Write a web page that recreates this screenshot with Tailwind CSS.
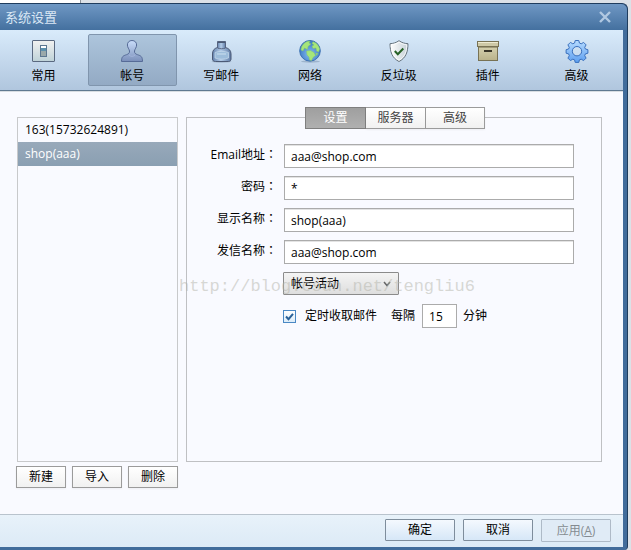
<!DOCTYPE html>
<html lang="zh-CN">
<head>
<meta charset="utf-8">
<meta name="viewport" content="width=device-width, initial-scale=1">
<title>系统设置</title>
<script src="https://cdn.jsdelivr.net/npm/@tailwindcss/browser@4"></script>
</head>
<body class="flex min-h-screen flex-col bg-[#dbe1e7] pr-[3px] font-['Open_Sans','Noto_Sans_CJK_SC',sans-serif] text-[12px] leading-4 text-black">
  <div class="h-[3px] w-[81px] border-r border-[#8b9299] bg-white"></div>

  <div class="relative flex flex-1 flex-col rounded-tr-md rounded-br-sm border-t border-r border-[#1f3d5e] bg-[#416c9b] pr-1 pb-[3px]">
    <header class="-mr-1 flex h-[26px] items-center justify-between rounded-tr-md bg-linear-to-b from-[#6f98c4] to-[#44709f] pr-4 pl-[5px]">
      <h1 class="text-[13px] text-[#dbe8f5]">系统设置</h1>
      <button type="button" aria-label="关闭" class="flex size-3 items-center justify-center">
        <svg class="size-3" viewBox="0 0 12 12" fill="none" stroke="#b0c8e1" stroke-width="2.4"><path d="M1 1l10 10M11 1L1 11"/></svg>
      </button>
    </header>

    <nav class="border-b border-[#5f7991] bg-linear-to-b from-[#d9ebfb] to-[#b0c6de]">
      <div class="mr-0.5 -ml-px grid h-[60px] grid-cols-7 py-1">
        <button type="button" class="flex flex-col items-center gap-[5px] pt-[5px]">
          <svg class="size-6" viewBox="0 0 24 24"><defs><linearGradient id="g1" x2="0" y2="1"><stop stop-color="#f2f2f1"/><stop offset="1" stop-color="#bed2d8"/></linearGradient></defs><rect x="1.5" y="1.5" width="22" height="21" rx=".5" fill="url(#g1)" stroke="#5a6980"/><rect x="9.5" y="6.5" width="6" height="11" fill="#9aa9aa" stroke="#5c7791"/><rect x="10" y="7" width="5" height="2" fill="#fff"/><rect x="10" y="9" width="5" height="3" fill="#5c91ad"/></svg>
          <span>常用</span>
        </button>
        <button type="button" aria-pressed="true" class="flex flex-col items-center gap-[5px] rounded-xs border border-[#8095ad] bg-linear-to-b from-[#adc5dc] to-[#93aac4] pt-1">
          <svg class="size-6" viewBox="0 0 24 24"><defs><linearGradient id="g2" x2="0" y2="1"><stop stop-color="#c9ddfa"/><stop offset="1" stop-color="#7a8fba"/></linearGradient></defs><path d="M12 1.500c-3 0-4.600 2-4.600 4.500 0 2.500 1.800 4 2.100 6 .3 2-1 3-3 3.700C3 16.900 1.500 17.500 1.500 22.500h21c0-5-1.500-5.600-5-6.800-2-.7-3.300-1.700-3-3.700.3-2 2.100-3.500 2.100-6 0-2.500-1.600-4.500-4.600-4.500z" fill="url(#g2)" stroke="#566b97"/><path d="M9 16c1.500 1.800 4.500 1.800 6 0" fill="none" stroke="#a9bbdf" opacity=".7"/></svg>
          <span>帐号</span>
        </button>
        <button type="button" class="flex flex-col items-center gap-[5px] pt-[5px]">
          <svg class="size-6" viewBox="0 0 24 24"><defs><linearGradient id="g3" x2="1" y2="0"><stop stop-color="#6482ad"/><stop offset=".45" stop-color="#b3cce8"/><stop offset="1" stop-color="#5f7ba5"/></linearGradient></defs><ellipse cx="12.500" cy="22.500" rx="10" ry="1.200" fill="#7c91aa" opacity=".5"/><path d="M8.500 8.500h8c3.500 1 5.500 3 5.500 6.500v5c0 1.500-1 2.500-2.500 2.500h-13C4.500 22.500 3.500 21.500 3.500 20v-5c0-3.500 1.500-5.500 5-6.500z" fill="url(#g3)" stroke="#4b5975"/><path d="M8.500 2.500h8V9c-2 1-6 1-8 0z" fill="url(#g3)" stroke="#56637f"/><path d="M9 3.500h7" stroke="#4a5a74"/><path d="M6 13.500c3-1.500 10.500-1.500 13.500 0v5.500c-4 1.500-9.500 1.500-13.500 0z" fill="#9dbddb" stroke="#c5daec" stroke-width=".7"/><path d="M8 15h9" stroke="#cce0ef"/></svg>
          <span>写邮件</span>
        </button>
        <button type="button" class="flex flex-col items-center gap-[5px] pt-[5px]">
          <svg class="size-6" viewBox="0 0 24 24"><defs><radialGradient id="g4" cy=".65"><stop stop-color="#86bff4"/><stop offset="1" stop-color="#4480c8"/></radialGradient></defs><ellipse cx="12.500" cy="22.500" rx="9.500" ry="1.200" fill="#64809e" opacity=".4"/><circle cx="12" cy="11.800" r="10.300" fill="url(#g4)" stroke="#3a70b2"/><path d="M4 7c2-3.500 5-5 8-5l-1 2 2 1-3 2.500-.5 3L6.500 9 5 12 3 11c0-1.500.3-2.700 1-4zM15 2.700c3.500 1 6 4 6.700 7.300l-1.200 3-2-1-.5-3-3 .5-1-2.500 2-1-2-1.500zM8.500 12l4-.5 3.500 2 1.500 3-2.500 2-1.500 3-2-.5-.5-3-2-2zM18 14l2 .5-1.500 2z" fill="#a6e67a" stroke="#80c76c" stroke-width=".5"/></svg>
          <span>网络</span>
        </button>
        <button type="button" class="flex flex-col items-center gap-[5px] pt-[5px]">
          <svg class="size-6" viewBox="0 0 24 24"><defs><linearGradient id="g5" x2="1"><stop stop-color="#fff"/><stop offset="1" stop-color="#c5d0d6"/></linearGradient></defs><path d="M12 1.700c2.800 2 5.600 2.800 9 3-.1 8-2 14.300-9 17.800C5 19 3.100 12.700 3 4.700c3.400-.2 6.200-1 9-3z" fill="url(#g5)" stroke="#65727c"/><path d="M12 3c2.500 1.700 5 2.500 7.800 2.800C19.600 12.500 18 18 12 21.200 6 18 4.400 12.500 4.200 5.800 7 5.500 9.500 4.700 12 3z" fill="none" stroke="#fff" stroke-width=".8"/><path d="M7.800 12l3 3.200 5.500-5.700" fill="none" stroke="#276126" stroke-width="2"/></svg>
          <span>反垃圾</span>
        </button>
        <button type="button" class="flex flex-col items-center gap-[5px] pt-[5px]">
          <svg class="size-6" viewBox="0 0 24 24"><defs><linearGradient id="g6" x2="0" y2="1"><stop stop-color="#d7d3b2"/><stop offset="1" stop-color="#b9b28a"/></linearGradient></defs><rect x="2.500" y="6.500" width="19" height="15" fill="url(#g6)" stroke="#787254"/><rect x="1.500" y="2.500" width="21" height="5" fill="#cec9a7" stroke="#787254"/><path d="M2 3.500h20" stroke="#eeebd2"/><path d="M3 8.500h18" stroke="#a09a79"/><path d="M8 12h8" stroke="#383528" stroke-width="2"/></svg>
          <span>插件</span>
        </button>
        <button type="button" class="flex flex-col items-center gap-[5px] pt-[5px]">
          <svg class="size-6" viewBox="0 0 24 24"><defs><linearGradient id="g7" x2="0" y2="1"><stop stop-color="#b6dbff"/><stop offset="1" stop-color="#5e9ff0"/></linearGradient></defs><path fill-rule="evenodd" d="M10.200 1.500h3.600l.6 2.500 1.800.8 2.400-1.400 2.500 2.500-1.400 2.400.7 1.700 2.500.7v3.500l-2.500.7-.7 1.800 1.400 2.400-2.500 2.500-2.400-1.400-1.800.7-.6 2.500h-3.600L9.600 20.900l-1.800-.7-2.400 1.400-2.500-2.500 1.400-2.400-.7-1.800-2.500-.7v-3.500l2.500-.7.7-1.700-1.400-2.400 2.500-2.500 2.400 1.400L9.600 4zM12 7.500a4.700 4.700 0 1 0 0 9.400 4.700 4.700 0 0 0 0-9.400z" fill="url(#g7)" stroke="#3a70bd" stroke-linejoin="round"/></svg>
          <span>高级</span>
        </button>
      </div>
    </nav>

    <main class="flex flex-1 gap-2 border-t border-[#d8dde2] bg-[#f9faff] pt-[25px] pr-[21px] pb-[26px] pl-4">
      <aside class="flex w-[162px] flex-col gap-1">
        <ul class="ml-px flex-1 border border-[#c8c9cb]">
          <li><button type="button" class="block h-6 w-full px-[7px] text-left">163(15732624891)</button></li>
          <li><button type="button" aria-current="true" class="block h-6 w-full bg-linear-to-b from-[#98a9ba] to-[#8a9fb2] px-[7px] text-left text-white">shop(aaa)</button></li>
        </ul>
        <div class="grid grid-cols-3 gap-1.5">
          <button type="button" class="h-[22px] border border-[#9b9b9b] bg-linear-to-b from-white to-[#f1f1f1] shadow-xs">新建</button>
          <button type="button" class="h-[22px] border border-[#9b9b9b] bg-linear-to-b from-white to-[#f1f1f1] shadow-xs">导入</button>
          <button type="button" class="h-[22px] border border-[#9b9b9b] bg-linear-to-b from-white to-[#f1f1f1] shadow-xs">删除</button>
        </div>
      </aside>

      <section class="mb-[26px] flex-1 border border-[#bfc0c3] pr-[27px]">
        <div role="tablist" class="-mt-[11px] mr-[-27px] flex justify-center pl-0.5">
          <button type="button" role="tab" aria-selected="true" class="h-[22px] w-[61px] border border-[#7f7f7f] bg-linear-to-b from-[#9f9f9f] to-[#b0b0b0] text-white">设置</button>
          <button type="button" role="tab" class="h-[22px] w-[60px] border-y border-r border-[#9b9b9b] bg-linear-to-b from-white to-[#f1f1f1] text-[#444] shadow-xs">服务器</button>
          <button type="button" role="tab" class="h-[22px] w-[59px] border-y border-r border-[#9b9b9b] bg-linear-to-b from-white to-[#f1f1f1] text-[#444] shadow-xs">高级</button>
        </div>

        <form class="mt-[15px] grid grid-cols-[90px_1fr] gap-x-[7px] gap-y-2">
          <label for="email" class="pt-0.5 text-right">Email地址<span class="font-['Noto_Sans_CJK_TC',sans-serif]" lang="zh-TW">：</span></label>
          <input id="email" type="text" value="aaa@shop.com" class="h-6 w-full border border-[#ababab] bg-white px-1.5 shadow-[inset_0_1px_0_#e3e3e3]">
          <label for="pwd" class="pt-0.5 text-right">密码<span class="font-['Noto_Sans_CJK_TC',sans-serif]" lang="zh-TW">：</span></label>
          <input id="pwd" type="text" value="*" class="h-6 w-full border border-[#ababab] bg-white px-1.5 shadow-[inset_0_1px_0_#e3e3e3]">
          <label for="display" class="pt-0.5 text-right">显示名称<span class="font-['Noto_Sans_CJK_TC',sans-serif]" lang="zh-TW">：</span></label>
          <input id="display" type="text" value="shop(aaa)" class="h-6 w-full border border-[#ababab] bg-white px-1.5 shadow-[inset_0_1px_0_#e3e3e3]">
          <label for="sender" class="pt-0.5 text-right">发信名称<span class="font-['Noto_Sans_CJK_TC',sans-serif]" lang="zh-TW">：</span></label>
          <input id="sender" type="text" value="aaa@shop.com" class="h-6 w-full border border-[#ababab] bg-white px-1.5 shadow-[inset_0_1px_0_#e3e3e3]">

          <div class="relative col-start-2 -ml-px h-6 w-[116px]">
            <select aria-label="帐号活动" class="block h-[23px] w-full appearance-none rounded-[1px] border border-[#8b8b8b] bg-linear-to-b from-[#f4f4f4] to-[#dedede] px-[7px]">
              <option>帐号活动</option>
            </select>
            <svg class="pointer-events-none absolute top-2 right-2 size-2" viewBox="0 0 8 8" fill="none" stroke="#666" stroke-width="1.500"><path d="M1 2l3 3.500L7 2"/></svg>
          </div>

          <div class="col-start-2 -ml-px flex h-6 items-center">
            <span class="relative flex">
              <input id="timed" type="checkbox" checked class="size-[13px] appearance-none border border-[#4a88c4] bg-linear-to-b from-white to-[#dcecf9]">
              <svg class="pointer-events-none absolute inset-0 size-[13px]" viewBox="0 0 13 13" fill="none" stroke="#2a6199" stroke-width="2"><path d="M3 6.500l2.500 2.700L10 3.800"/></svg>
            </span>
            <label for="timed" class="ml-[9px]">定时收取邮件</label>
            <label for="minutes" class="ml-[14px]">每隔</label>
            <input id="minutes" type="text" value="15" class="ml-[7px] h-6 w-[35px] border border-[#ababab] bg-white px-1.5">
            <span class="ml-1.5">分钟</span>
          </div>
        </form>
      </section>
    </main>

    <footer class="flex h-[33px] justify-end gap-2 border-t border-[#b9c3cd] bg-linear-to-b from-[#e8f2fa] to-[#dceaf6] pt-1 pr-3">
      <button type="button" class="h-[22px] w-[70px] rounded-[1px] border border-[#7e8d9c] bg-linear-to-b from-[#f4f9fe] to-[#d6e7f7]">确定</button>
      <button type="button" class="h-[22px] w-[70px] rounded-[1px] border border-[#7e8d9c] bg-linear-to-b from-[#f4f9fe] to-[#d6e7f7]">取消</button>
      <button type="button" disabled class="h-[23px] w-[70px] rounded-[1px] border border-[#aebac7] bg-[#e0ebf6] text-[#858b91]">应用(<u>A</u>)</button>
    </footer>

    <p class="pointer-events-none absolute top-[271px] left-[179px] font-['Liberation_Mono',monospace] text-[17px] leading-6 text-[#b4b4aa]/50">http://blog.csdn.net/tengliu6</p>
  </div>
</body>
</html>
